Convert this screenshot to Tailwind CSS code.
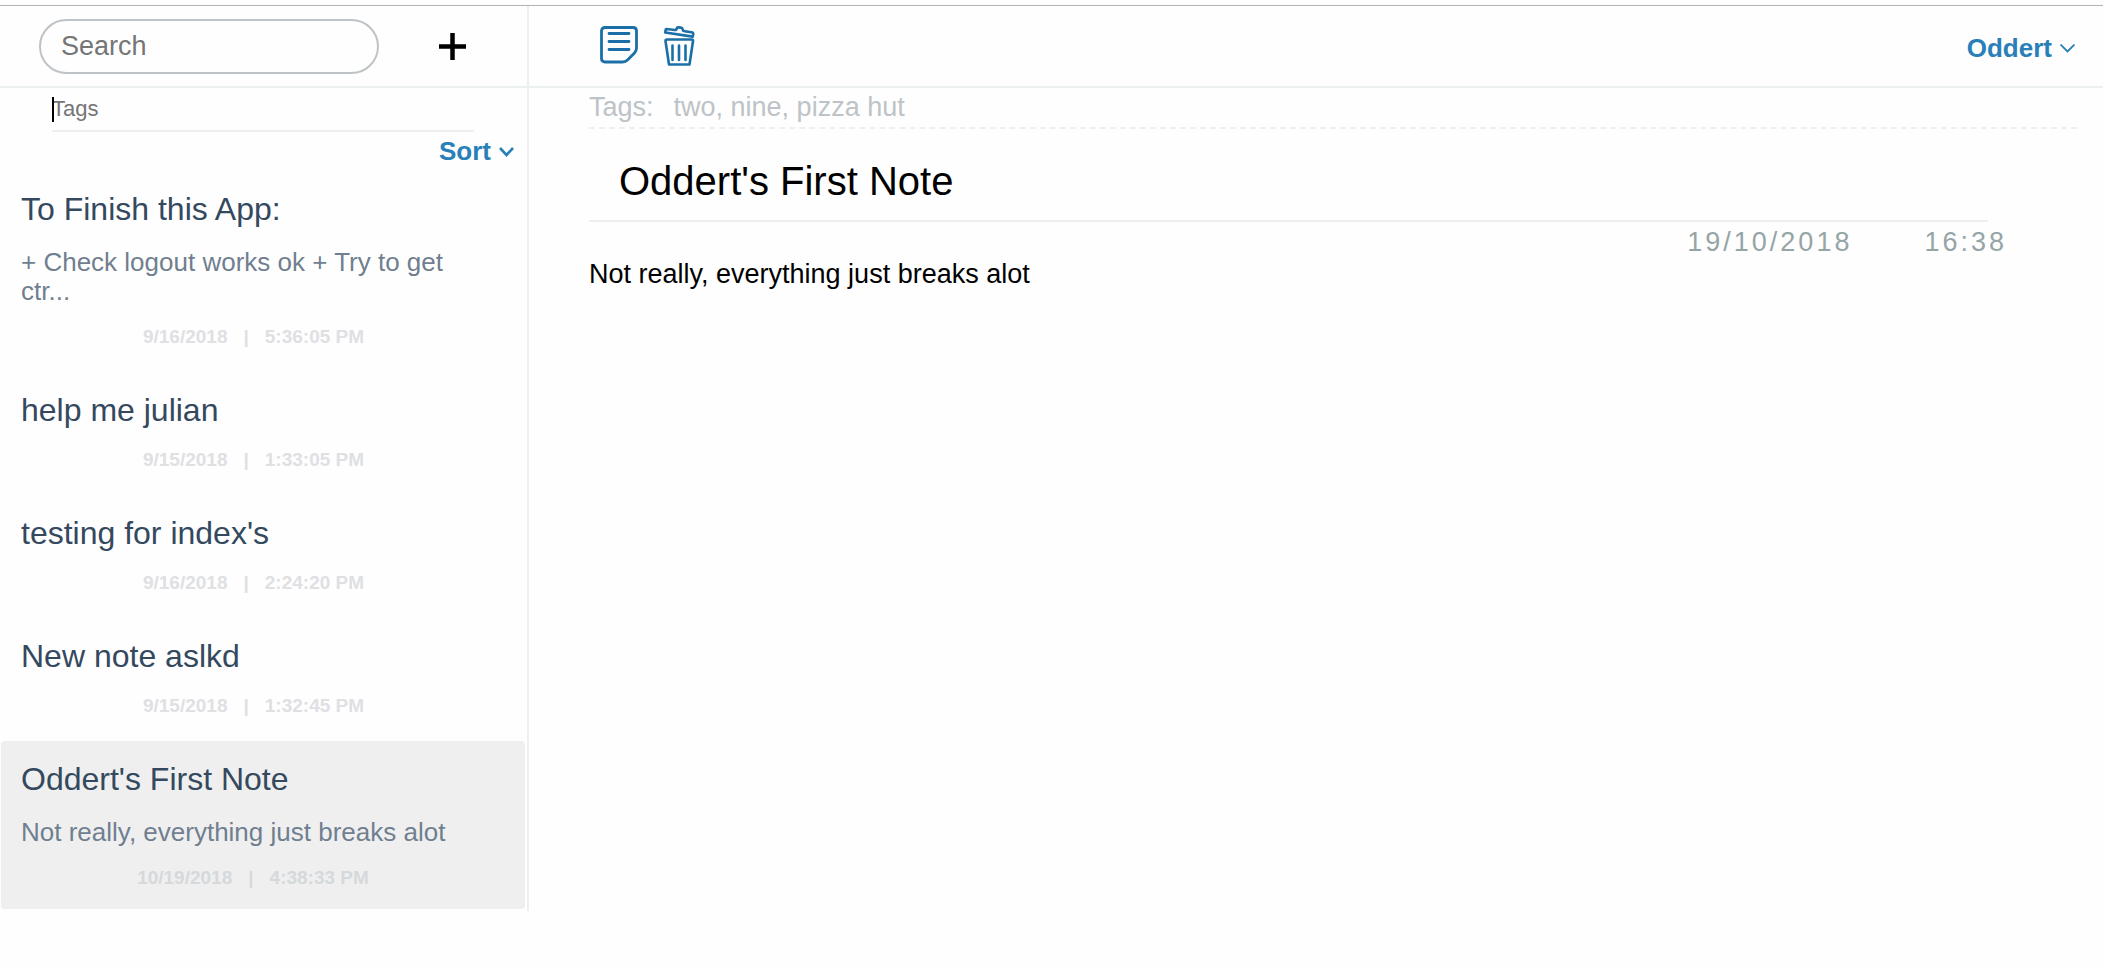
<!DOCTYPE html>
<html lang="en">
<head>
<meta charset="utf-8">
<title>Notes</title>
<script src="https://cdn.jsdelivr.net/npm/@tailwindcss/browser@4"></script>
</head>
<body class="bg-[#fefefe] font-['Liberation_Sans',Arial,sans-serif] text-black">
<div class="mt-[5px] border-t border-[#b3b3b3]">
  <header class="flex h-[82px] border-b-2 border-[#ecf0f1]">
    <div class="flex w-[529px] shrink-0 items-center border-r-2 border-[#ecf0f1] pl-[39px]">
      <input type="search" aria-label="Search" placeholder="Search" class="h-[55px] w-[340px] rounded-[28px] border-2 border-[#bdc3c7] px-5 text-[27px] placeholder:text-[#757575]">
      <button aria-label="New note" class="ml-[60px] p-0">
        <svg width="27" height="27" viewBox="0 0 27 27" stroke="#000" stroke-width="4.500"><path d="M13.500 0v27M0 13.500h27"/></svg>
      </button>
    </div>
    <div class="flex flex-1 items-center justify-between pr-7 pl-[71px]">
      <div class="flex items-start gap-[26px]">
        <button aria-label="Notes">
          <svg width="38" height="38" viewBox="0 0 38 38" fill="none" stroke="#1a6fa8" stroke-width="2.800" stroke-linecap="round" stroke-linejoin="round"><path d="M5 1.500H33Q36.500 1.500 36.500 5V22Q36.500 25 34.500 27L27.500 34Q25.500 36 22.500 36H5Q1.500 36 1.500 32.500V5Q1.500 1.500 5 1.500ZM9 7.500H29M9 15.500H29M9 23.500H29"/></svg>
        </button>
        <button aria-label="Delete note">
          <svg width="31" height="40" viewBox="0 0 31 40" fill="none" stroke="#1a6fa8" stroke-width="2.600" stroke-linecap="round" stroke-linejoin="round"><path d="M3 13.500H28Q29.200 13.500 29 15L25.500 38.500H5L1.500 15Q1.400 13.500 3 13.500ZM8.500 19.500V34M15 19.500V34M21.500 19.500V34M2.500 3 11 4Q12.500 4 12.700 2.500Q13 1.300 14.500 1.400L17 1.600Q18.500 1.800 18.700 3.500Q18.900 5 20.500 5.200L27.500 6.200Q29.500 6.500 29.200 8.500L28.700 10.600 1.300 6.500 1.600 4Q1.700 3 2.500 3Z"/></svg>
        </button>
      </div>
      <button class="flex items-center gap-2 pt-1 text-[26px] font-bold text-[#2980b9]">Oddert
        <svg width="15" height="9" viewBox="0 0 15 9" fill="none" stroke="currentColor" stroke-width="1.800"><path d="M.5.5 7.500 7.500 14.500.5"/></svg>
      </button>
    </div>
  </header>
  <div class="flex items-start">
    <aside class="w-[529px] shrink-0 border-r-2 border-[#ecf0f1]">
      <div class="relative mr-[53px] ml-[52px]">
        <input type="text" aria-label="Tags" placeholder="Tags" class="block h-[44px] w-full border-b-2 border-[#ecf0f1] text-[22px] caret-transparent outline-none placeholder:text-[#757575]">
        <span class="absolute top-[9px] left-0 h-[25px] w-[2px] bg-black"></span>
      </div>
      <div class="flex h-[39px] items-center justify-end pr-[13px]">
        <button class="flex items-center gap-2 text-[26px] font-bold text-[#2980b9]">Sort
          <svg width="15" height="10" viewBox="0 0 15 10" fill="none" stroke="currentColor" stroke-width="2.600"><path d="M1 1 7.500 8 14 1"/></svg>
        </button>
      </div>
      <ul class="px-px pb-[2px]">
        <li class="px-5 pt-[19px] pb-6">
          <h2 class="text-[32px] leading-[38px] text-[#34495e]">To Finish this App:</h2>
          <p class="mt-5 pr-10 text-[26px] leading-[29px] text-[#707f8f]">+ Check logout works ok + Try to get ctr...</p>
          <p class="mt-5 flex justify-center gap-4 pr-5 text-[19px] leading-[22px] font-bold text-[#dee0e3]"><span>9/16/2018</span><span>|</span><span>5:36:05 PM</span></p>
        </li>
        <li class="px-5 pt-[19px] pb-6">
          <h2 class="text-[32px] leading-[38px] text-[#34495e]">help me julian</h2>
          <p class="mt-5 flex justify-center gap-4 pr-5 text-[19px] leading-[22px] font-bold text-[#dee0e3]"><span>9/15/2018</span><span>|</span><span>1:33:05 PM</span></p>
        </li>
        <li class="px-5 pt-[19px] pb-6">
          <h2 class="text-[32px] leading-[38px] text-[#34495e]">testing for index's</h2>
          <p class="mt-5 flex justify-center gap-4 pr-5 text-[19px] leading-[22px] font-bold text-[#dee0e3]"><span>9/16/2018</span><span>|</span><span>2:24:20 PM</span></p>
        </li>
        <li class="px-5 pt-[19px] pb-6">
          <h2 class="text-[32px] leading-[38px] text-[#34495e]">New note aslkd</h2>
          <p class="mt-5 flex justify-center gap-4 pr-5 text-[19px] leading-[22px] font-bold text-[#dee0e3]"><span>9/15/2018</span><span>|</span><span>1:32:45 PM</span></p>
        </li>
        <li class="mr-px rounded bg-[#efefef] px-5 pt-[19px] pb-5">
          <h2 class="text-[32px] leading-[38px] text-[#34495e]">Oddert's First Note</h2>
          <p class="mt-5 text-[26px] leading-[29px] text-[#707f8f]">Not really, everything just breaks alot</p>
          <p class="mt-5 flex justify-center gap-4 pr-5 text-[19px] leading-[22px] font-bold text-[#d6d9db]"><span>10/19/2018</span><span>|</span><span>4:38:33 PM</span></p>
        </li>
      </ul>
    </aside>
    <main class="flex-1 pr-[26px] pl-[60px]">
      <div class="flex h-[41px] items-center gap-5 border-b-2 border-dashed border-[#ecf0f1] text-[27px] text-[#bdc3c7]">
        <label for="tags">Tags:</label>
        <input id="tags" value="two, nine, pizza hut" class="h-8 flex-1 outline-none">
      </div>
      <div class="pr-[89px]">
        <input aria-label="Title" value="Oddert's First Note" class="mt-[13px] block h-[80px] w-full border-b-2 border-[#ecf0f1] px-[30px] text-[40px] outline-none">
      </div>
      <div class="flex h-[31px] items-center justify-end gap-[72px] pt-[10px] pr-[70px] text-[27px] tracking-[3px] text-[#95a5a6]"><span>19/10/2018</span><span>16:38</span></div>
      <textarea aria-label="Note" rows="5" class="block w-full resize-none text-[27px] leading-[42px] outline-none">Not really, everything just breaks alot</textarea>
    </main>
  </div>
</div>
</body>
</html>
